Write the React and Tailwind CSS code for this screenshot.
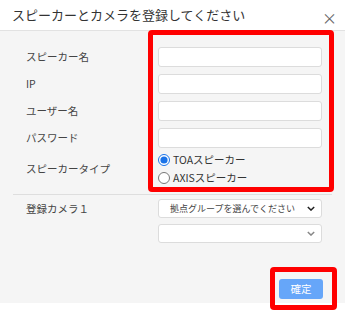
import { useState } from "react";

const textFields = ["スピーカー名", "IP", "ユーザー名", "パスワード"];

function Chevron({ className }) {
  return (
    <svg viewBox="0 0 10 6" className={className} fill="none" stroke="currentColor" strokeWidth="1.8">
      <path d="M1 1l4 4 4-4" />
    </svg>
  );
}

function SelectBox({ value, dark }) {
  return (
    <div className="relative h-[19px] w-[164px] rounded-[3px] border border-[#dcdcdc] bg-white">
      <span className="block pl-[11px] text-[9px] leading-[17px] text-[#444]">{value}</span>
      <Chevron
        className={
          "absolute right-[6px] top-[6px] h-[5px] w-[8px] " + (dark ? "text-[#222]" : "text-[#888]")
        }
      />
    </div>
  );
}

export default function App() {
  const [speakerType, setSpeakerType] = useState("toa");

  return (
    <div className="relative h-[310px] w-[345px] overflow-hidden bg-white font-['Noto_Sans_CJK_JP',sans-serif] text-[#333]">
      <div className="flex h-[31px] items-center justify-between border-b border-[#e2e2e2] pl-[12px] pr-[8px]">
        <h1 className="pb-[2px] text-[13px] leading-none text-[#333]">スピーカーとカメラを登録してください</h1>
        <span className="mt-[4px] text-[15px] leading-none text-[#666]">×</span>
      </div>

      <div className="h-[272px] bg-[#f5f5f5] pt-[16px]">
        <div className="flex flex-col gap-[7px] pl-[26px]">
          {textFields.map((label) => (
            <div key={label} className="flex items-center">
              <span className="w-[132px] text-[10.5px] text-[#444]">{label}</span>
              <input
                type={label === "パスワード" ? "password" : "text"}
                className="h-[20px] w-[164px] rounded-[3px] border border-[#dcdcdc] bg-white"
              />
            </div>
          ))}
          <div className="-mt-[4px] flex items-center">
            <span className="w-[132px] text-[10.5px] text-[#444]">スピーカータイプ</span>
            <div className="flex flex-col">
              {[
                ["toa", "TOAスピーカー"],
                ["axis", "AXISスピーカー"],
              ].map(([key, text]) => (
                <label key={key} className="flex h-[18px] items-center gap-[3px] text-[10.5px] text-[#333]">
                  <input
                    type="radio"
                    name="speakerType"
                    checked={speakerType === key}
                    onChange={() => setSpeakerType(key)}
                    className="m-0 h-[12px] w-[12px] accent-[#1a73e8]"
                  />
                  {text}
                </label>
              ))}
            </div>
          </div>
        </div>

        <div className="mx-[13px] mt-[7px] h-px bg-[#dedede]" />

        <div className="mt-[4px] flex flex-col gap-[6px] pl-[26px]">
          <div className="flex items-center">
            <span className="w-[132px] text-[10.5px] text-[#444]">登録カメラ１</span>
            <SelectBox value="拠点グループを選んでください" dark />
          </div>
          <div className="pl-[132px]">
            <SelectBox value="" />
          </div>
        </div>

        <div className="mt-[36px] flex justify-end pr-[22px]">
          <button className="h-[20px] w-[44px] rounded-[3px] bg-[#66a6f9] text-[10.5px] text-white">確定</button>
        </div>
      </div>

      <div className="pointer-events-none absolute left-[148px] top-[30px] h-[162px] w-[186px] rounded-[4px] border-[5px] border-[#ff0000]" />
      <div className="pointer-events-none absolute left-[270px] top-[267px] h-[43px] w-[67px] rounded-[4px] border-[5px] border-[#ff0000]" />
    </div>
  );
}
